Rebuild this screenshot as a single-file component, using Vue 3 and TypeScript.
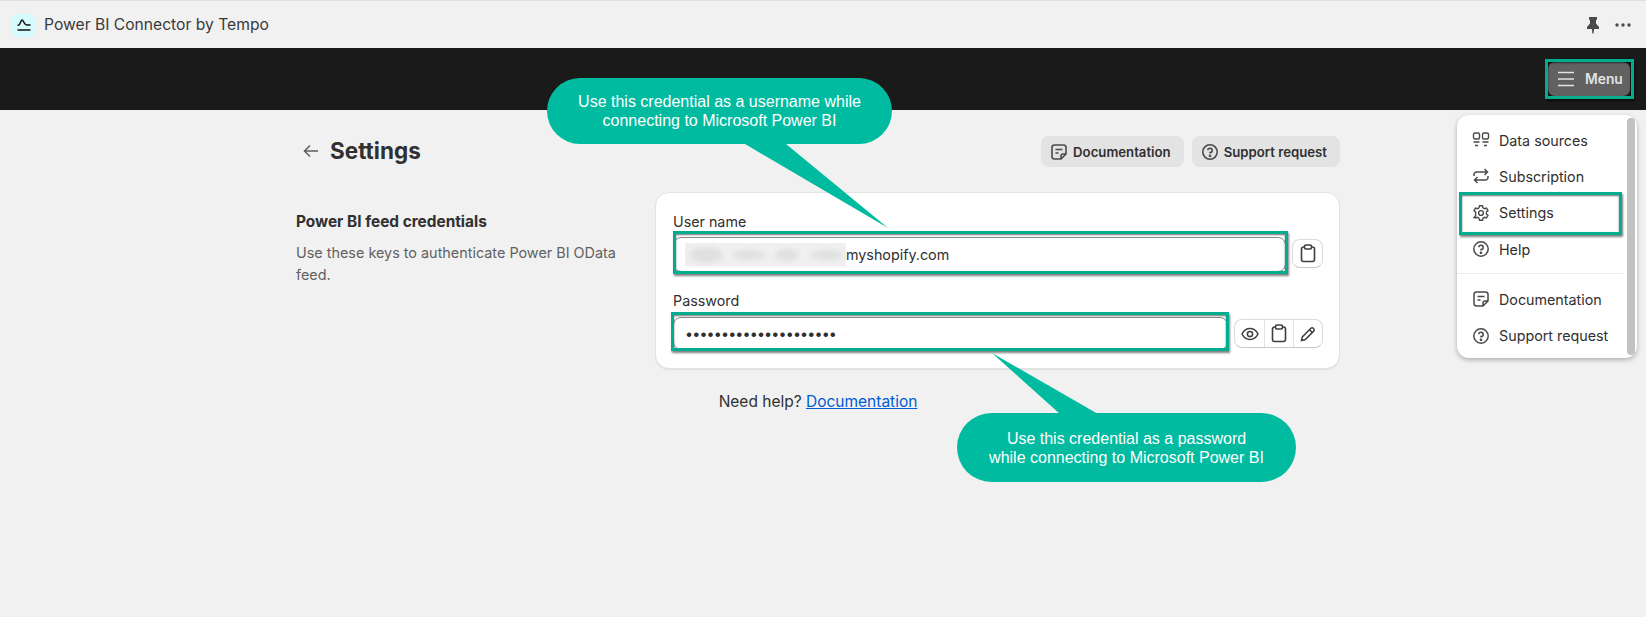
<script setup lang="ts">
const blobs = [
  { cx: 21, cy: 12, rx: 17, ry: 8 },
  { cx: 64, cy: 12, rx: 17, ry: 5 },
  { cx: 102, cy: 12, rx: 12, ry: 6 },
  { cx: 142, cy: 12, rx: 16, ry: 5 },
]
const dots = '•'.repeat(21)
</script>

<template>
  <div class="page">
    <header class="topbar">
      <div class="app-id">
        <span class="logo">
          <svg width="14" height="12" viewBox="0 0 14 12" fill="none" stroke="#111" stroke-width="1.5">
            <path d="M0.500 11H13.500" />
            <path d="M0.500 6.200H1.500C3.500 6.200 3.500 1 5 1C6.500 1 7 6 10 6H13.500" />
          </svg>
        </span>
        <span class="app-name">Power BI Connector by Tempo</span>
      </div>
      <div class="top-tools">
        <svg width="14" height="18" viewBox="0 0 14 18" fill="#4a4a4a">
          <path d="M3 1h8v2.500L10 4v3.500l3 3.500v2H8.100l-.5 4.500h-1.200L5.900 13H1v-2l3-3.500V4l-1-.5z" />
        </svg>
        <svg width="18" height="6" viewBox="0 0 18 6" fill="#4a4a4a">
          <circle cx="3" cy="3" r="1.700" /><circle cx="9" cy="3" r="1.700" /><circle cx="15" cy="3" r="1.700" />
        </svg>
      </div>
    </header>

    <div class="blackbar">
      <button class="menu-btn">
        <svg width="18" height="16" viewBox="0 0 18 16" fill="none" stroke="#e3e3e3" stroke-width="1.500">
          <path d="M1 1.500h16M1 8h16M1 14.500h16" />
        </svg>
        <span>Menu</span>
        <i class="hl hl-menu"></i>
      </button>
    </div>

    <main class="content">
      <div class="head">
        <div class="title-group">
          <svg class="back" width="16" height="14" viewBox="0 0 16 14" fill="none" stroke="#5c5c5c" stroke-width="1.500">
            <path d="M15 7H1.500M7 1.500 1.500 7 7 12.500" />
          </svg>
          <h1>Settings</h1>
        </div>
        <div class="head-actions">
          <button class="ghost">
            <svg width="18" height="18" viewBox="0 0 18 18" fill="none" stroke="#4a4a4a" stroke-width="1.600">
              <path d="M11 16H4.500A2.500 2.500 0 0 1 2 13.500V4.500A2.500 2.500 0 0 1 4.500 2h9A2.500 2.500 0 0 1 16 4.500V11zM11 16v-3a2 2 0 0 1 2-2h3M5.500 6.500h7M5.500 10h3" />
            </svg>
            Documentation
          </button>
          <button class="ghost">
            <svg width="18" height="18" viewBox="0 0 18 18" fill="none" stroke="#4a4a4a" stroke-width="1.600">
              <circle cx="9" cy="9" r="7.200" />
              <path d="M6.800 7.200A2.200 2.200 0 1 1 9 9.600v.8" />
              <circle cx="9" cy="12.800" r=".6" fill="#4a4a4a" />
            </svg>
            Support request
          </button>
        </div>
      </div>

      <section class="layout">
        <div class="intro">
          <h2>Power BI feed credentials</h2>
          <p>Use these keys to authenticate Power BI OData feed.</p>
        </div>
        <div class="card">
          <div class="field user-field">
            <label>User name</label>
            <div class="row">
              <div class="input user">
                <span class="blur">
                  <svg width="161" height="23" viewBox="0 0 161 23" class="blur-svg">
                    <ellipse v-for="b in blobs" :key="b.cx" :cx="b.cx" :cy="b.cy" :rx="b.rx" :ry="b.ry" fill="#e0e0e0" />
                  </svg>
                </span>
                <span>myshopify.com</span>
                <i class="hl hl-user"></i>
              </div>
              <div class="btn-group">
                <button class="icon-btn">
                  <svg width="16" height="19" viewBox="0 0 16 19" fill="none" stroke="#3f3f3f" stroke-width="1.600">
                    <path d="M4.500 3H3.500A2 2 0 0 0 1.500 5v10.500a2 2 0 0 0 2 2h9a2 2 0 0 0 2-2V5a2 2 0 0 0-2-2h-1" />
                    <rect x="4.500" y="1" width="7" height="4" rx="1.500" />
                  </svg>
                </button>
              </div>
            </div>
          </div>
          <div class="field pass-field">
            <label>Password</label>
            <div class="row">
              <div class="input pass">
                <span>{{ dots }}</span>
                <i class="hl hl-pass"></i>
              </div>
              <div class="btn-group">
                <button class="icon-btn">
                  <svg width="18" height="14" viewBox="0 0 18 14" fill="none" stroke="#3f3f3f" stroke-width="1.500">
                    <path d="M1 7c1.800-3.600 4.600-5.500 8-5.500S15.200 3.400 17 7c-1.800 3.600-4.600 5.500-8 5.500S2.800 10.600 1 7z" />
                    <circle cx="9" cy="7" r="2.600" />
                  </svg>
                </button>
                <button class="icon-btn">
                  <svg width="16" height="19" viewBox="0 0 16 19" fill="none" stroke="#3f3f3f" stroke-width="1.600">
                    <path d="M4.500 3H3.500A2 2 0 0 0 1.500 5v10.500a2 2 0 0 0 2 2h9a2 2 0 0 0 2-2V5a2 2 0 0 0-2-2h-1" />
                    <rect x="4.500" y="1" width="7" height="4" rx="1.500" />
                  </svg>
                </button>
                <button class="icon-btn">
                  <svg width="16" height="16" viewBox="0 0 16 16" fill="none" stroke="#3f3f3f" stroke-width="1.500">
                    <path d="M1.500 14.500l.8-3.600 8.600-8.600a1.700 1.700 0 0 1 2.400 0l.4.400a1.700 1.700 0 0 1 0 2.400l-8.600 8.600zM9.500 3.700l2.800 2.800" />
                  </svg>
                </button>
              </div>
            </div>
          </div>
        </div>
      </section>
      <p class="help">Need help? <a href="#">Documentation</a></p>
    </main>

    <nav class="menu">
      <ul>
        <li>
          <svg viewBox="0 0 18 18" fill="none" stroke="#4a4a4a" stroke-width="1.400">
            <rect x="1.500" y="2" width="6" height="6" rx="1.500" /><rect x="10.500" y="2" width="6" height="6" rx="1.500" />
            <path d="M1.500 11h6M10.500 11h6M3 14.500h3M12 14.500h3" />
          </svg>
          Data sources
        </li>
        <li>
          <svg viewBox="0 0 18 18" fill="none" stroke="#4a4a4a" stroke-width="1.500">
            <path d="M2 9V7.500A2.500 2.500 0 0 1 4.500 5H15M12.500 2l3 3-3 3M16 9v1.500A2.500 2.500 0 0 1 13.500 13H3M5.500 10l-3 3 3 3" />
          </svg>
          Subscription
        </li>
        <li class="selected">
          <svg viewBox="0 0 18 18" fill="none" stroke="#4a4a4a" stroke-width="1.400">
            <path d="M7.500 1.800h3l.5 2.100 1.500.8 2-.7 1.500 2.600-1.600 1.500v1.800l1.600 1.500-1.500 2.600-2-.7-1.500.8-.5 2.100h-3l-.5-2.100-1.500-.8-2 .7L2 13.400l1.600-1.500V8.100L2 6.600l1.500-2.600 2 .7L7 3.900z" />
            <circle cx="9" cy="9" r="2.400" />
          </svg>
          Settings
          <i class="hl hl-settings"></i>
        </li>
        <li>
          <svg viewBox="0 0 18 18" fill="none" stroke="#4a4a4a" stroke-width="1.500">
            <circle cx="9" cy="9" r="7.200" /><path d="M6.800 7.200A2.200 2.200 0 1 1 9 9.600v.8" /><circle cx="9" cy="12.800" r=".6" fill="#4a4a4a" />
          </svg>
          Help
        </li>
      </ul>
      <ul class="second">
        <li>
          <svg viewBox="0 0 18 18" fill="none" stroke="#4a4a4a" stroke-width="1.500">
            <path d="M11 16H4.500A2.500 2.500 0 0 1 2 13.500V4.500A2.500 2.500 0 0 1 4.500 2h9A2.500 2.500 0 0 1 16 4.500V11zM11 16v-3a2 2 0 0 1 2-2h3M5.500 6.500h7M5.500 10h3" />
          </svg>
          Documentation
        </li>
        <li>
          <svg viewBox="0 0 18 18" fill="none" stroke="#4a4a4a" stroke-width="1.500">
            <circle cx="9" cy="9" r="7.200" /><path d="M6.800 7.200A2.200 2.200 0 1 1 9 9.600v.8" /><circle cx="9" cy="12.800" r=".6" fill="#4a4a4a" />
          </svg>
          Support request
        </li>
      </ul>
      <span class="scroll-thumb"></span>
    </nav>

    <div class="callout c1">Use this credential as a username while<br />connecting to Microsoft Power BI</div>
    <svg class="tail t1" width="150" height="90" viewBox="0 0 150 90"><path d="M0 0H41L143 84z" fill="#00bb9f" /></svg>
    <div class="callout c2">Use this credential as a password<br />while connecting to Microsoft Power BI</div>
    <svg class="tail t2" width="110" height="64" viewBox="0 0 110 64"><path d="M68 62H106L0 1z" fill="#00bb9f" /></svg>
  </div>
</template>

<style>
html, body { margin: 0; background: #f1f1f1; }
</style>

<style scoped>
.page {
  position: relative;
  width: 1646px;
  height: 617px;
  overflow: hidden;
  background: #f1f1f1;
  font-family: Inter, "Liberation Sans", sans-serif;
  color: #303030;
}
.topbar {
  height: 48px;
  box-sizing: border-box;
  border-top: 1px solid #e0e0e0;
  display: flex;
  align-items: center;
  justify-content: space-between;
  padding: 0 14px 0 12px;
}
.app-id { display: flex; align-items: center; gap: 9px; }
.logo {
  width: 23px; height: 23px;
  margin-top: 1px;
  border-radius: 5px;
  background: #d6fbff;
  display: flex; align-items: center; justify-content: center;
}
.app-name { font-size: 15.650px; color: #3a3a3a; }
.top-tools { display: flex; align-items: center; gap: 14px; }
.blackbar {
  height: 62px;
  background: #1a1a1a;
  display: flex;
  align-items: center;
  justify-content: flex-end;
  padding-right: 16px;
}
.menu-btn {
  position: relative;
  width: 82px; height: 34px;
  padding: 0 0 0 9px;
  box-sizing: border-box;
  border: 0;
  border-radius: 7px;
  background: #616161;
  color: #e3e3e3;
  display: flex; align-items: center; gap: 10px;
  font: 600 13.800px Inter, sans-serif;
}
.hl {
  position: absolute;
  display: block;
  box-sizing: border-box;
  border: 3px solid #00ae8f;
  box-shadow: 1px 2px 2px rgba(0, 0, 0, .5), inset 0 1px 2px rgba(0, 0, 0, .55);
  pointer-events: none;
}
.hl-menu { inset: -3px -4px -3px -3px; }
.content { width: 1044px; margin-left: 296px; }
.head {
  display: flex;
  justify-content: space-between;
  align-items: center;
  margin-top: 26px;
  height: 31px;
}
.title-group { display: flex; align-items: center; gap: 11px; padding-left: 7px; margin-top: -2px; }
.back { margin-top: 1px; }
h1 { margin: 0; font-size: 22.500px; font-weight: 700; color: #303030; }
.head-actions { display: flex; gap: 8px; }
.ghost {
  height: 31px;
  padding: 0 13px 0 9px;
  border: 0;
  border-radius: 8px;
  background: #e3e3e3;
  color: #303030;
  display: flex; align-items: center; gap: 5px;
  font: 600 13.200px Inter, sans-serif;
}
.layout { display: flex; margin-top: 25px; }
.intro { width: 359px; padding-top: 20px; }
h2 { margin: 0; font-size: 15.400px; line-height: 20px; font-weight: 650; color: #303030; }
.intro p { margin: 10px 0 0; width: 335px; font-size: 14.400px; line-height: 22px; color: #616161; }
.card {
  box-sizing: border-box;
  width: 685px;
  height: 177px;
  background: #fff;
  border: 1px solid #e3e3e3;
  border-radius: 14px;
  padding: 20px 16px 0 17px;
  box-shadow: 0 1px 1px rgba(0, 0, 0, .08);
}
label { display: block; font-size: 14.300px; line-height: 18px; color: #303030; }
.field + .field { margin-top: 20px; }
.row { display: flex; align-items: center; gap: 6px; margin-top: 6px; }
.pass-field .row { margin-top: 7px; }
.input {
  position: relative;
  flex: 1;
  height: 33px;
  box-sizing: border-box;
  border: 1px solid #8a8a8a;
  border-radius: 8px;
  background: #fff;
  display: flex; align-items: center;
  padding-left: 11px;
  font-size: 14.300px;
}
.input.user { height: 35px; }
.user-field .btn-group { margin-top: -2px; }
.blur {
  width: 161px; height: 23px;
  background: #f0f0f0;
  overflow: hidden;
}
.blur-svg { display: block; filter: blur(2.500px); }
.pass { letter-spacing: -0.850px; }
.hl-user { inset: -7px -3px -3px -1px; }
.hl-pass { inset: -6px -2px -2px -3px; }
.btn-group {
  display: flex;
  height: 29px;
  box-sizing: border-box;
  background: #fff;
  border: 1px solid #dcdcdc;
  border-bottom-color: #c8c8c8;
  border-radius: 8px;
}
.icon-btn {
  width: 29px;
  padding: 0;
  border: 0;
  background: transparent;
  display: flex; align-items: center; justify-content: center;
}
.icon-btn + .icon-btn { border-left: 1px solid #e3e3e3; }
.help { margin: 23px 0 0; text-align: center; font-size: 15.500px; }
.help a { color: #005bd3; text-decoration: underline; }
.menu {
  position: absolute;
  left: 1457px; top: 115px;
  width: 180px; height: 243px;
  box-sizing: border-box;
  background: #fff;
  border-radius: 12px;
  box-shadow: 0 2px 5px rgba(0, 0, 0, .28);
  padding: 7px 0 0;
}
.menu ul { list-style: none; margin: 0; padding: 0 0 6px; }
.menu .second { border-top: 1px solid #ebebeb; padding-top: 7px; width: 166px; }
.menu li {
  position: relative;
  height: 36.300px;
  display: flex; align-items: center; gap: 9px;
  padding-left: 15px;
  font-size: 14.300px;
  color: #303030;
}
.menu svg { width: 18px; height: 18px; flex: none; }
.hl-settings { inset: -3px 15px -4px 2px; }
.scroll-thumb {
  position: absolute;
  right: 2px; top: 3px;
  width: 8px; height: 237px;
  border-radius: 4px;
  background: #c2c2c2;
}
.callout {
  position: absolute;
  background: #00bb9f;
  color: #fff;
  font: 16px/19px "Liberation Sans", Arial, sans-serif;
  text-align: center;
  display: flex; align-items: center; justify-content: center;
  z-index: 3;
}
.c1 { left: 547px; top: 78px; width: 345px; height: 66px; border-radius: 33px; }
.c2 { left: 957px; top: 413px; width: 339px; height: 69px; border-radius: 35px; padding-top: 1px; box-sizing: border-box; }
.tail { position: absolute; z-index: 3; }
.t1 { left: 745px; top: 144px; }
.t2 { left: 992px; top: 352px; }
</style>
